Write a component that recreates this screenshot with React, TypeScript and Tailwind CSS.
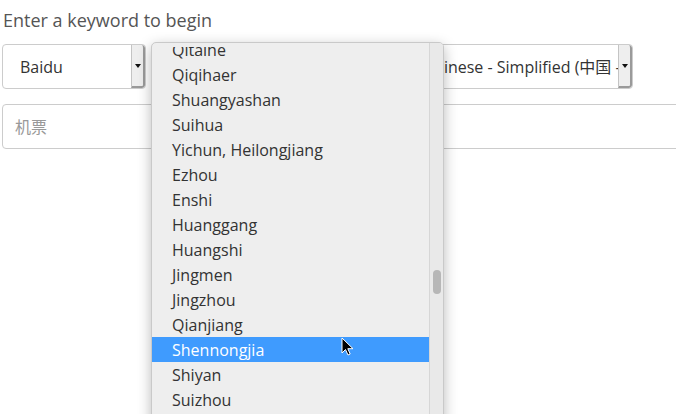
import React from 'react';

// Keyword search form with the location dropdown open

const cities = [
  'Qitaihe',
  'Qiqihaer',
  'Shuangyashan',
  'Suihua',
  'Yichun, Heilongjiang',
  'Ezhou',
  'Enshi',
  'Huanggang',
  'Huangshi',
  'Jingmen',
  'Jingzhou',
  'Qianjiang',
  'Shennongjia',
  'Shiyan',
  'Suizhou',
  'Xianning',
];

function SelectBox({ label, className }: { label: string; className: string }) {
  return (
    <div className={`flex h-[45px] border border-[#cccccc] rounded-[4px] bg-white overflow-hidden ${className}`}>
      <div className="flex-1 min-w-0 overflow-hidden whitespace-nowrap pl-[17px] flex items-center text-[16px] text-[#333333]">
        {label}
      </div>
      <div className="w-[14px] shrink-0 flex items-center justify-center bg-[#eeeeee] border-l border-[#c4c4c4] border-r-2 border-b-2 border-r-[#9a9a9a] border-b-[#9a9a9a] rounded-r-[3px]">
        <svg width="6" height="4" viewBox="0 0 6 4">
          <path d="M0 0h6L3 4z" fill="#111" />
        </svg>
      </div>
    </div>
  );
}

export default function App() {
  return (
    <div className="relative w-[676px] h-[414px] overflow-hidden bg-white font-['Open_Sans','Noto_Sans_CJK_SC',sans-serif]">
      <div className="pt-[8px] pl-[2px]">
        <p className="pl-[1px] text-[18px] leading-[24px] text-[#555555]">Enter a keyword to begin</p>

        <div className="mt-[12px] flex gap-[6px]">
          <SelectBox label="Baidu" className="w-[144px]" />
          <SelectBox label="Shennongjia" className="w-[248px]" />
          <SelectBox label="Chinese - Simplified (中国 - 简体中文)" className="w-[227px]" />
        </div>

        <div className="mt-[15px] h-[45px] w-[700px] border border-[#cccccc] rounded-[4px] flex items-center pl-[12px] text-[16px] text-[#999999]">
          机票
        </div>
      </div>

      {/* Open dropdown list */}
      <div className="absolute left-[151px] top-[42px] w-[293px] h-[390px] flex bg-[#eeeeee] border border-[#c9c9c9] rounded-t-[5px] overflow-hidden shadow-[0_4px_14px_rgba(0,0,0,0.28)]">
        <div className="flex-1 pt-[4px] flex flex-col">
          <div className="flex-1 overflow-hidden">
            <ul className="-mt-[10px]">
              {cities.map((city) => (
                <li
                  key={city}
                  className={`h-[25px] pl-[20px] flex items-center text-[16px] ${
                    city === 'Shennongjia' ? 'bg-[#3f9bfe] text-white' : 'text-[#333333]'
                  }`}
                >
                  {city}
                </li>
              ))}
            </ul>
          </div>
        </div>
        <div className="w-[14px] shrink-0 bg-[#e9e9e9] border-l border-[#d6d6d6] pt-[227px] pl-[3px]">
          <div className="w-[8px] h-[24px] rounded-full bg-[#b7b7b7]" />
        </div>
      </div>

      {/* Mouse pointer */}
      <svg className="absolute left-[341px] top-[337px]" width="13" height="20" viewBox="0 0 13 20">
        <path d="M1 1v15l3.5-3.5 2.5 5.5 2.2-1-2.4-5.3H12z" fill="#000" stroke="#fff" strokeWidth="1" strokeLinejoin="round" />
      </svg>
    </div>
  );
}
